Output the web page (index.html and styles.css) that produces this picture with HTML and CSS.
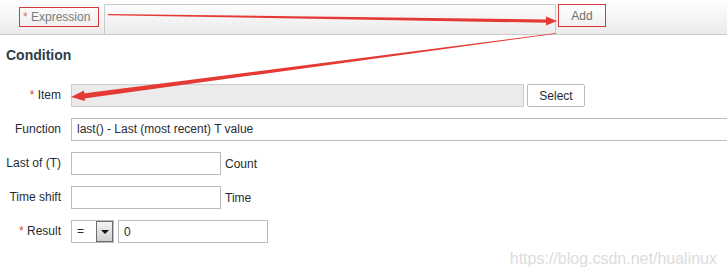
FILE: index.html
```html
<!DOCTYPE html>
<html lang="en">
<head>
  <meta charset="UTF-8">
  <meta name="viewport" content="width=device-width, initial-scale=1">
  <title>Trigger expression</title>
  <link rel="stylesheet" href="styles.css">
</head>
<body>

  <div class="expr-bar">
    <div class="expr-label"><span class="req">*</span> Expression</div>
    <div class="expr-input"></div>
    <button class="add-btn">Add</button>
  </div>

  <div class="condition">
    <h3>Condition</h3>

    <div class="form-grid">
      <label><span class="req">*</span> Item</label>
      <div class="field">
        <input class="txt item-txt" type="text" readonly>
        <button class="sel-btn">Select</button>
      </div>

      <label>Function</label>
      <div class="field">
        <div class="func-sel">last() - Last (most recent) T value</div>
      </div>

      <label>Last of (T)</label>
      <div class="field">
        <input class="txt short" type="text">
        <span class="unit">Count</span>
      </div>

      <label>Time shift</label>
      <div class="field">
        <input class="txt short" type="text">
        <span class="unit">Time</span>
      </div>

      <label><span class="req">*</span> Result</label>
      <div class="field">
        <div class="op-sel">
          <span class="op-val">=</span>
          <span class="op-arrow"></span>
        </div>
        <input class="txt short" type="text" value="0">
      </div>
    </div>
  </div>

  <!-- annotation arrows -->
  <svg class="marks" width="727" height="278" viewBox="0 0 727 278">
    <polygon points="108,14 108,15.2 547,22.8 547,19.4" fill="#e53935"/>
    <polygon points="557,21 546,16.5 546,25.5" fill="#e53935"/>
    <polygon points="556,33 556,33.8 84,98.4 83,93.6" fill="#e53935"/>
    <polygon points="71,97 84,90.5 85,101" fill="#e53935"/>
  </svg>

  <div class="watermark">https://blog.csdn.net/hualinux</div>

</body>
</html>
```

FILE: styles.css
```css
html, body {
  margin: 0;
  overflow: hidden;
}
body {
  font-family: "Liberation Sans", Arial, sans-serif;
  font-size: 12px;
  color: #1f2c33;
  background: #fff;
  width: 727px;
  height: 278px;
  position: relative;
}
.req {
  color: #d64541;
}

/* top expression bar */
.expr-bar {
  display: flex;
  align-items: flex-start;
  height: 30px;
  padding: 4px 0 0 19px;
  background: linear-gradient(#ffffff, #ebebeb);
  border-bottom: 1px solid #c9cccd;
}
.expr-label {
  box-sizing: border-box;
  width: 80px;
  height: 20px;
  margin-top: 3px;
  border: 1px solid #d9383a;
  color: #7b7b7b;
  line-height: 18px;
  padding-left: 3px;
}
.expr-label .req {
  color: #e07070;
}
.expr-input {
  box-sizing: border-box;
  width: 452px;
  height: 30px;
  margin-left: 5px;
  border: 1px solid #c8cbcc;
  border-bottom: none;
}
.add-btn {
  box-sizing: border-box;
  width: 48px;
  height: 23px;
  margin-left: 2px;
  border: 1px solid #d9383a;
  background: linear-gradient(#ffffff, #f1f1f1);
  color: #6f6f6f;
  font-family: inherit;
  font-size: 12px;
  padding: 0;
}

/* condition form */
.condition h3 {
  margin: 12px 0 20px 6px;
  font-size: 14px;
  line-height: 17px;
  color: #2e3d47;
}
.form-grid {
  display: grid;
  grid-template-columns: 61px 1fr;
  column-gap: 10px;
  row-gap: 11px;
}
.form-grid label {
  text-align: right;
  line-height: 23px;
  white-space: nowrap;
}
.field {
  display: flex;
  align-items: center;
  height: 23px;
}
.txt {
  box-sizing: border-box;
  height: 23px;
  border: 1px solid #b7bec2;
  background: #fff;
  font-family: inherit;
  font-size: 12px;
  color: #1f2c33;
  padding: 0 5px;
  margin: 0;
}
.item-txt {
  width: 453px;
  background: #ebebeb;
  border-color: #c8cdd0;
}
.sel-btn {
  box-sizing: border-box;
  width: 58px;
  height: 23px;
  margin-left: 3px;
  border: 1px solid #b7bec2;
  border-radius: 2px;
  background: #fff;
  font-family: inherit;
  font-size: 12px;
  color: #1f2c33;
  padding: 0;
}
.func-sel {
  box-sizing: border-box;
  width: 656px;
  height: 23px;
  border: 1px solid #b7bec2;
  border-right: none;
  line-height: 21px;
  padding-left: 5px;
}
.short {
  width: 150px;
}
.unit {
  margin-left: 4px;
}
.op-sel {
  box-sizing: border-box;
  display: flex;
  width: 43px;
  height: 23px;
  margin-right: 4px;
  border: 1px solid #b7bec2;
}
.op-val {
  flex: 1;
  line-height: 21px;
  padding-left: 5px;
}
.op-arrow {
  box-sizing: border-box;
  width: 17px;
  height: 21px;
  border: 1px solid #6d6d6d;
  background: linear-gradient(#f4f4f4, #cfcfcf);
  display: flex;
  align-items: center;
  justify-content: center;
}
.op-arrow::after {
  content: "";
  border-left: 4px solid transparent;
  border-right: 4px solid transparent;
  border-top: 4px solid #111;
}

/* overlays */
.marks {
  position: absolute;
  left: 0;
  top: 0;
  pointer-events: none;
}
.watermark {
  position: absolute;
  right: 10px;
  top: 250px;
  font-size: 16px;
  color: #dcdcdc;
}
```
